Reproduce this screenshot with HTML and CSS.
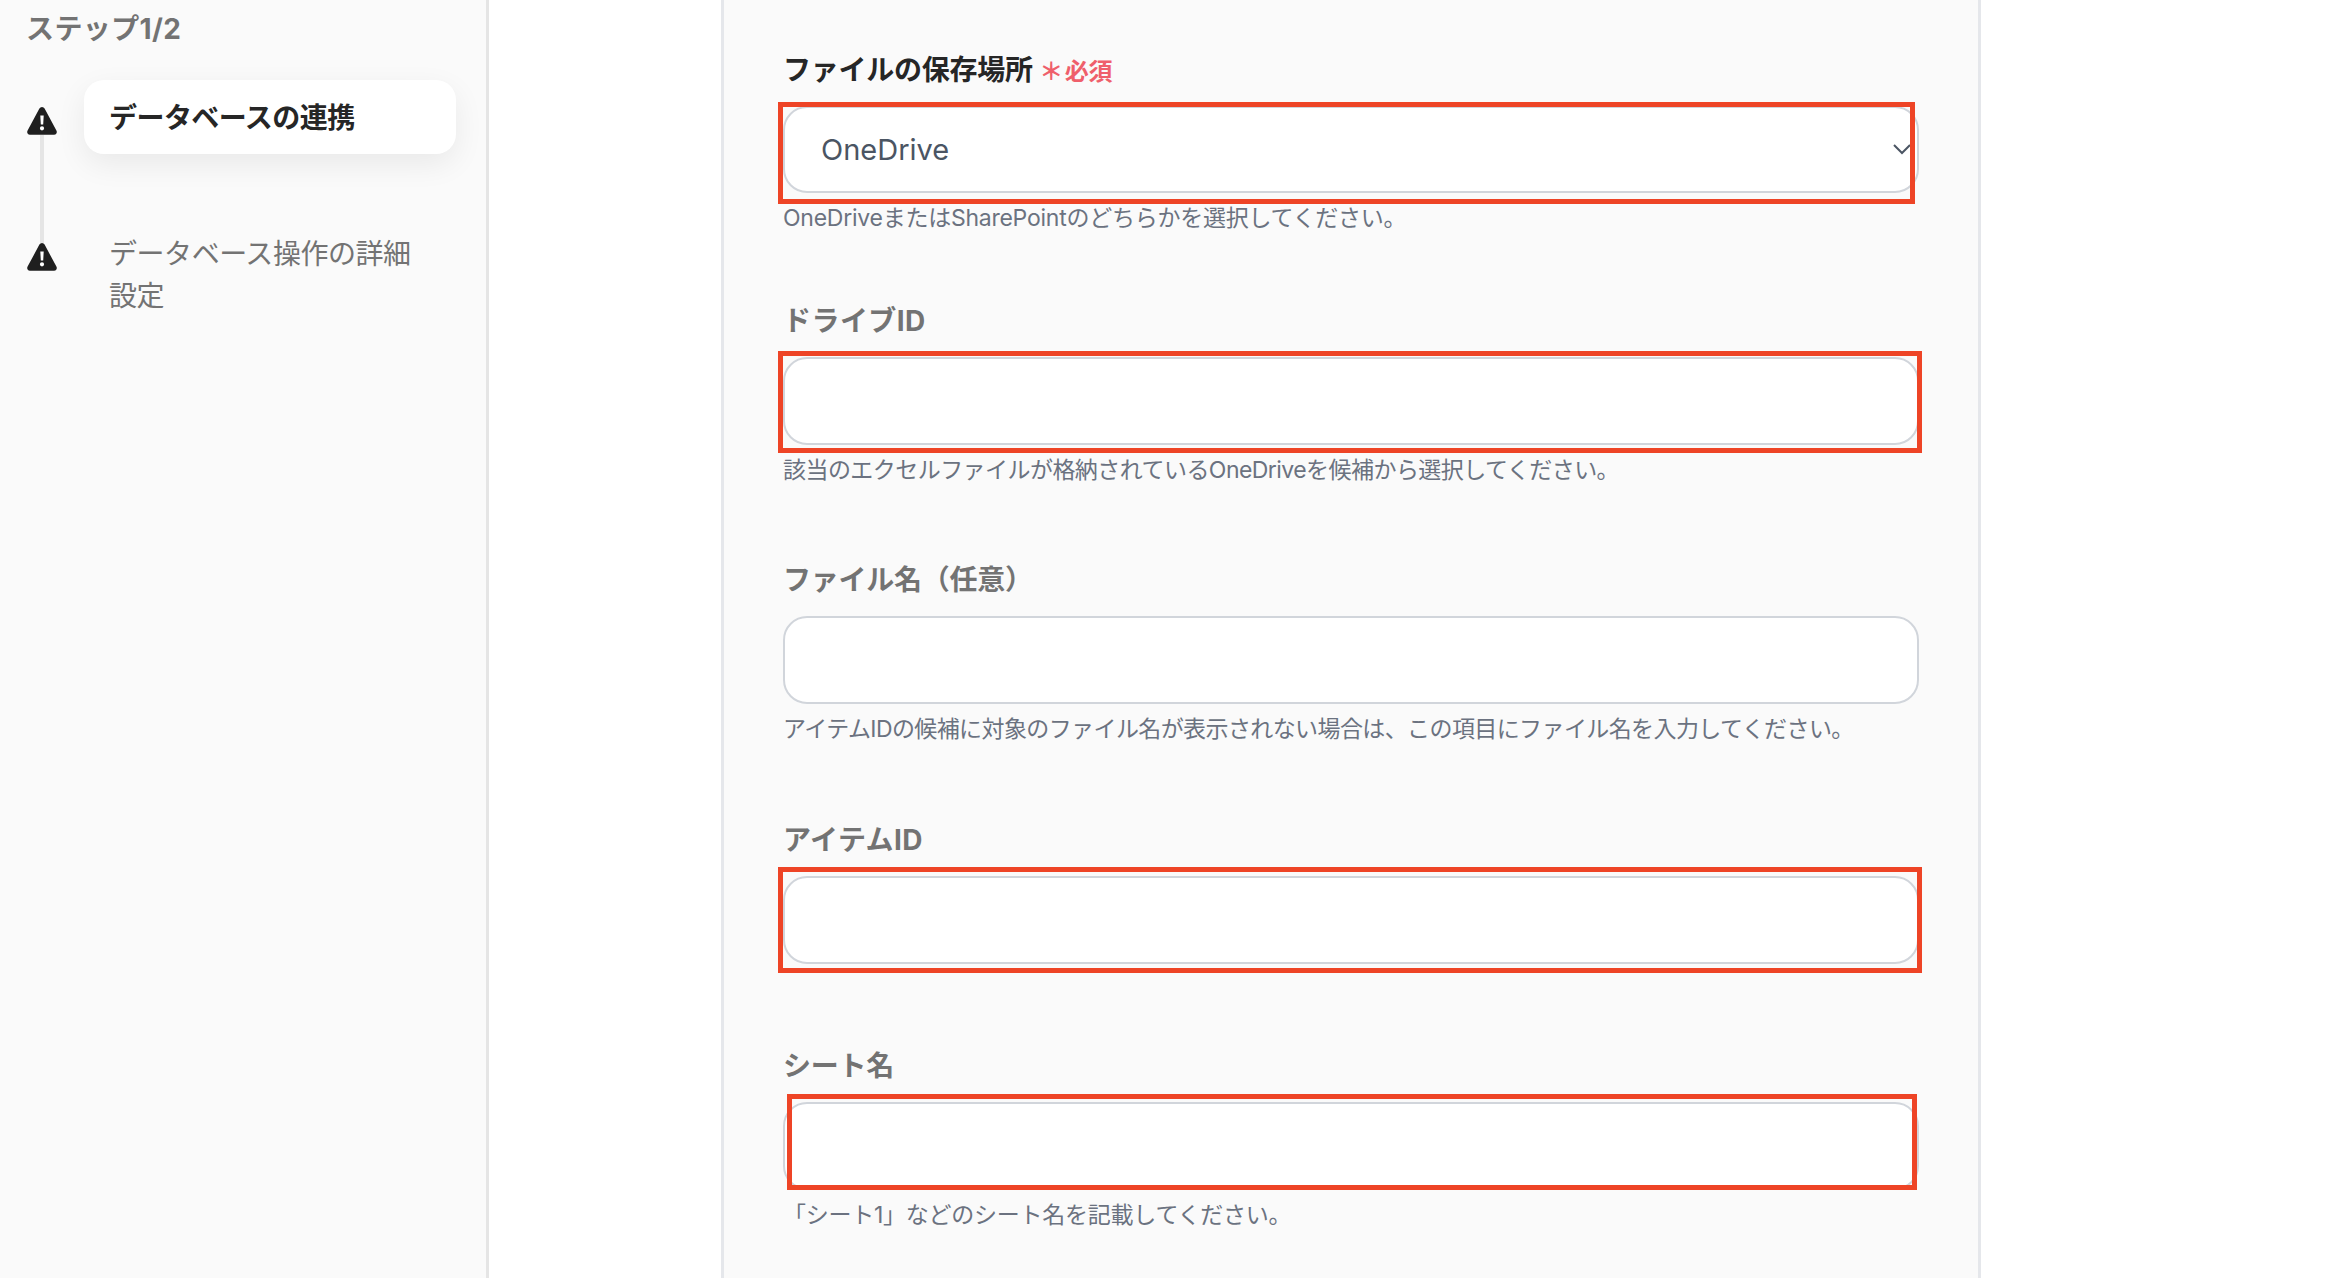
FILE: index.html
```html
<!DOCTYPE html>
<html lang="ja">
<head>
<meta charset="utf-8">
<title>データベースの連携</title>
<link rel="stylesheet" href="styles.css">
</head>
<body>
<div class="page">
  <aside class="sidebar">
    <div class="step-title">ステップ1/2</div>
    <ol class="steps">
      <li class="step step-active">
        <svg class="warn" viewBox="0 0 30 28"><path class="warn-bg" d="M12.4 1.6a3 3 0 0 1 5.2 0l11.8 22a2.8 2.8 0 0 1-2.5 4.2H3.1a2.8 2.8 0 0 1-2.5-4.2z"/><path class="warn-fg" d="M13.3 8.5h3.4l-.5 9h-2.4zM15 19.2a2.1 2.1 0 1 1 0 4.2 2.1 2.1 0 0 1 0-4.2z"/></svg>
        <div class="step-card">データベースの連携</div>
      </li>
      <li class="step step-next">
        <svg class="warn" viewBox="0 0 30 28"><path class="warn-bg" d="M12.4 1.6a3 3 0 0 1 5.2 0l11.8 22a2.8 2.8 0 0 1-2.5 4.2H3.1a2.8 2.8 0 0 1-2.5-4.2z"/><path class="warn-fg" d="M13.3 8.5h3.4l-.5 9h-2.4zM15 19.2a2.1 2.1 0 1 1 0 4.2 2.1 2.1 0 0 1 0-4.2z"/></svg>
        <div class="step-text">データベース操作の詳細設定</div>
      </li>
    </ol>
  </aside>
  <main class="main">
    <form class="card">
      <div class="field field-1">
        <div class="label label-on">ファイルの保存場所 <span class="req"><span class="star">＊</span>必須</span></div>
        <div class="select-wrap">
          <select class="control select"><option>OneDrive</option></select>
          <svg class="chev" viewBox="0 0 18 11"><path d="M1 1l8 8 8-8"/></svg>
        </div>
        <div class="help help-wide">OneDriveまたはSharePointのどちらかを選択してください。</div>
        <div class="mark mark-1"></div>
      </div>
      <div class="field field-2">
        <div class="label label-id">ドライブID</div>
        <input class="control" type="text">
        <div class="help">該当のエクセルファイルが格納されているOneDriveを候補から選択してください。</div>
        <div class="mark mark-2"></div>
      </div>
      <div class="field field-3">
        <div class="label">ファイル名（任意）</div>
        <input class="control" type="text">
        <div class="help help-tight">アイテムIDの候補に対象のファイル名が表示されない場合は、この項目にファイル名を入力してください。</div>
      </div>
      <div class="field field-4">
        <div class="label label-id">アイテムID</div>
        <input class="control" type="text">
        <div class="mark mark-4"></div>
      </div>
      <div class="field field-5">
        <div class="label">シート名</div>
        <input class="control" type="text">
        <div class="help help-wide">「シート1」などのシート名を記載してください。</div>
        <div class="mark mark-5"></div>
      </div>
    </form>
  </main>
</div>
</body>
</html>
```
FILE: styles.css
```css
* { box-sizing: border-box; }
html, body { margin: 0; height: 100%; overflow: hidden; background: #fff; }
body { font-family: Inter, "Noto Sans CJK JP", sans-serif; }
.page { display: flex; height: 1278px; overflow: hidden; }

.sidebar { width: 489px; flex: none; background: #fafafa; border-right: 3px solid #e5e5e5; padding: 8px 0 0 27px; }
.step-title { font-size: 28px; line-height: 42px; font-weight: 700; color: #737373; letter-spacing: .4px; margin-left: -1px; }
.steps { list-style: none; margin: 30px 0 0; padding: 0; }
.step { display: flex; align-items: flex-start; position: relative; }
.warn { width: 30px; height: 28px; flex: none; }
.warn-bg { fill: #1f1f1f; }
.warn-fg { fill: #fff; }
.step-active { height: 163px; }
.step-active .warn { margin-top: 27px; }
.step-active::after { content: ""; position: absolute; left: 13px; top: 55px; width: 4px; height: 108px; background: #e5e5e5; }
.step-card { margin-left: 27px; width: 372px; height: 74px; border-radius: 20px; background: #fff; box-shadow: 0 10px 30px rgba(0,0,0,.07); padding: 1px 0 0 25px; font-size: 28px; line-height: 74px; font-weight: 700; color: #262626; letter-spacing: -.55px; }
.step-next .warn { margin-top: 0; }
.step-text { margin-left: 27px; margin-top: -10px; width: 372px; padding: 0 26px 0 25px; font-size: 28px; line-height: 42px; color: #737373; letter-spacing: -.45px; }

.main { flex: 1; padding-left: 232px; }
.card { width: 1260px; margin-top: -30px; height: 1400px; background: #fafafa; border: 3px solid #e5e7eb; border-radius: 24px; padding: 0 59px; }

.field { position: relative; }
.field-1 { padding-top: 76px; }
.field-2 { padding-top: 66px; }
.field-3 { padding-top: 73px; }
.field-4 { padding-top: 74px; }
.field-5 { padding-top: 81px; }

.label { font-size: 28px; line-height: 42px; height: 42px; font-weight: 700; color: #737373; letter-spacing: -.25px; }
.label-on { color: #262626; }
.label-id { letter-spacing: .45px; }
.req { font-size: 24px; color: #ef5f6b; letter-spacing: -.3px; }
.star { margin-right: 2px; }
.control { display: block; width: 100%; height: 88px; margin-top: 15px; border: 2px solid #d1d5db; border-radius: 24px; background: #fff; padding: 0 36px; font-family: Inter, "Noto Sans", sans-serif; font-size: 29px; color: #4b5563; outline: none; }
.select { height: 87px; appearance: none; -webkit-appearance: none; }
.select-wrap { position: relative; }
.chev { position: absolute; right: 8px; top: 38px; width: 18px; height: 11px; fill: none; stroke: #4b5563; stroke-width: 2; }
.help { font-size: 23px; line-height: 32px; margin-top: 9px; color: #6b7280; letter-spacing: -.55px; }
.help-wide { letter-spacing: -.25px; }
.help-tight { letter-spacing: -.6px; }

.mark { position: absolute; border: 5px solid #ee4426; pointer-events: none; }
.mark-1 { left: -5px; top: 129px; width: 1137px; height: 102px; }
.mark-2 { left: -5px; top: 117px; width: 1144px; height: 102px; }
.mark-4 { left: -5px; top: 122px; width: 1144px; height: 106px; }
.mark-5 { left: 4px; top: 130px; width: 1130px; height: 96px; }
```
